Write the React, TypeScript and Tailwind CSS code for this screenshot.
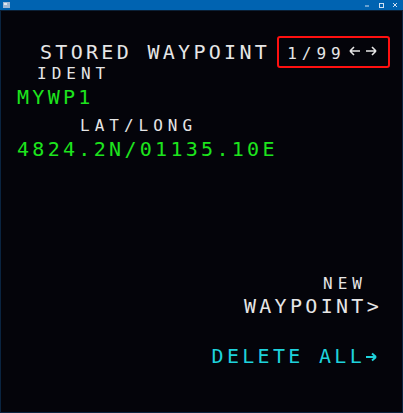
import React from "react";

const mono = { fontFamily: '"DejaVu Sans Mono", monospace' };

export default function App() {
  return (
    <div className="w-[403px] h-[413px] flex flex-col bg-[#04040a] overflow-hidden" style={mono}>
      {/* title bar */}
      <div className="h-[10px] bg-[#0063b1] flex items-center justify-between px-[3px] shrink-0">
        <svg width="7" height="6" viewBox="0 0 7 6">
          <rect x="0" y="0" width="7" height="6" fill="#9fb7d3" />
          <rect x="1" y="1" width="3" height="2" fill="#dfe8f2" />
        </svg>
        <div className="flex items-center gap-[8px] pr-[2px]">
          <svg width="6" height="6" viewBox="0 0 6 6">
            <line x1="1" y1="4" x2="5" y2="4" stroke="#cfe0f2" strokeWidth="1" />
          </svg>
          <svg width="6" height="6" viewBox="0 0 6 6">
            <rect x="1.5" y="1.5" width="4" height="4" fill="none" stroke="#cfe0f2" strokeWidth="1" />
          </svg>
          <svg width="6" height="6" viewBox="0 0 6 6">
            <path d="M1 1L5 5M5 1L1 5" stroke="#cfe0f2" strokeWidth="1" />
          </svg>
        </div>
      </div>
      <div className="h-[1px] bg-[#0b2036] shrink-0" />
      <div className="flex-1 flex flex-col border-x border-b border-[#0a2440]">
        {/* row 1 */}
        <div className="mt-[25px] h-[32px] flex items-center pl-[39px]">
          <span className="text-[20px] leading-[20px] tracking-[3.3px] text-[#e6e6e6]">STORED WAYPOINT</span>
          <div className="ml-[7px] h-[32px] w-[113px] border-2 border-[#ff1010] rounded-[3px] flex items-center pl-[8px]">
            <span className="text-[16px] leading-[16px] tracking-[5px] text-[#e6e6e6] mt-[4px]">1/99</span>
            <svg width="30" height="12" viewBox="0 0 30 12" className="ml-[3px] -mt-[3px]">
              <path d="M1 6H11M1 6L5 2M1 6L5 10" stroke="#e6e6e6" strokeWidth="1.6" fill="none" />
              <path d="M17 6H27M27 6L23 2M27 6L23 10" stroke="#e6e6e6" strokeWidth="1.6" fill="none" />
            </svg>
          </div>
        </div>
        <div className="-mt-[2px] h-[16px] pl-[36px] text-[16px] leading-[16px] tracking-[5px] text-[#e6e6e6]">IDENT</div>
        <div className="mt-[5px] h-[20px] pl-[16px] text-[20px] leading-[20px] tracking-[3.3px] text-[#1de41d]">MYWP1</div>
        <div className="mt-[11px] h-[16px] pl-[79px] text-[16px] leading-[16px] tracking-[5px] text-[#e6e6e6]">LAT/LONG</div>
        <div className="mt-[5px] h-[20px] pl-[16px] text-[20px] leading-[20px] tracking-[3.3px] text-[#1de41d]">4824.2N/01135.10E</div>
        <div className="mt-[117px] h-[16px] flex justify-end pr-[35px] text-[16px] leading-[16px] tracking-[5px] text-[#e6e6e6]">NEW</div>
        <div className="mt-[4px] h-[20px] flex justify-end pr-[20px] text-[20px] leading-[20px] tracking-[3.3px] text-[#e6e6e6]">WAYPOINT&gt;</div>
        <div className="mt-[30px] h-[20px] flex items-center justify-end pr-[24px] text-[20px] leading-[20px] tracking-[3.3px] text-[#1ed2dc]">
          <span>DELETE ALL</span>
          <svg width="13" height="10" viewBox="0 0 13 10" className="mt-[1px]">
            <path d="M1 5H11M11 5L7 1.5M11 5L7 8.5" stroke="#1ed2dc" strokeWidth="2" fill="none" />
          </svg>
        </div>
      </div>
    </div>
  );
}
